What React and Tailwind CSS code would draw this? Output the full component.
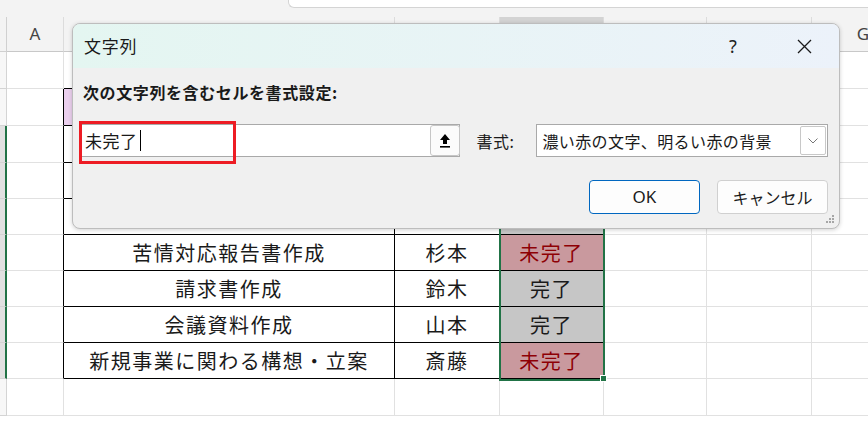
import React from 'react';

// column widths: row-header, A, B, C, D, E, F, G
const COLS = 'grid grid-cols-[7px_57px_331px_105px_104px_103px_105px_103px]';
const LETTERS = ['A', 'B', 'C', 'D', 'E', 'F', 'G'];

// rows 2-5 sit under the dialog, so only their fills matter
const ROWS = [
  { h: 'h-[37px]' },
  { h: 'h-[37px]', task: ' ', head: true },
  { h: 'h-[37px]', task: ' ', status: '完了', sel: true, hidden: true },
  { h: 'h-[36px]', task: ' ', status: '未完了', sel: true, hidden: true },
  { h: 'h-[36px]', task: ' ', status: '完了', sel: true, hidden: true },
  { h: 'h-[36px]', task: '苦情対応報告書作成', who: '杉本', status: '未完了', sel: true },
  { h: 'h-[36px]', task: '請求書作成', who: '鈴木', status: '完了', sel: true },
  { h: 'h-[36px]', task: '会議資料作成', who: '山本', status: '完了', sel: true },
  { h: 'h-[36px]', task: '新規事業に関わる構想・立案', who: '斎藤', status: '未完了', sel: true },
  { h: 'h-[37px]' },
];

function SheetRow({ row, aboveTable }) {
  const inTable = !!row.task;
  const cell = 'flex items-center justify-center border-r border-b';
  const tableBorder = 'border-black';
  const gridBorder = 'border-[#e1e1e1]';
  const edge = aboveTable ? 'border-r-[#e1e1e1] border-b-black' : gridBorder;

  let statusCls = `${cell} ${inTable ? tableBorder : edge}`;
  if (row.head) statusCls += ' bg-[#ebd0ee]';
  else if (row.sel && row.status === '未完了') statusCls += ' bg-[#c9999e] text-[#8e0005]';
  else if (row.sel) statusCls += ' bg-[#c6c6c6]';

  return (
    <div className={`${COLS} ${row.h}`}>
      <div
        className={`border-b ${
          row.sel
            ? 'bg-[#e1e1e1] border-b-[#d4d4d4] border-r-2 border-r-[#217346]'
            : 'bg-[#f7f7f7] border-r border-[#d4d4d4]'
        }`}
      />
      <div className={`border-b border-b-[#e1e1e1] border-r ${inTable ? 'border-r-black' : 'border-r-[#e1e1e1]'}`} />
      <div className={`${cell} ${inTable ? tableBorder : edge} ${row.head ? 'bg-[#ebd0ee]' : ''}`}>
        {row.task}
      </div>
      <div className={`${cell} ${inTable ? tableBorder : edge} ${row.head ? 'bg-[#ebd0ee]' : ''}`}>
        {row.who}
      </div>
      <div className={statusCls}>{row.hidden ? null : row.status}</div>
      <div className={`${cell} ${gridBorder}`} />
      <div className={`${cell} ${gridBorder}`} />
      <div className={`${cell} ${gridBorder}`} />
    </div>
  );
}

function UploadIcon() {
  return (
    <svg width="12" height="16" viewBox="0 0 12 16">
      <path d="M6 1 L11 7 H8 V11 H4 V7 H1 Z" fill="#000" />
      <rect x="1" y="13" width="10" height="1.6" fill="#000" />
    </svg>
  );
}

function ConditionDialog() {
  return (
    <div className="absolute left-[72px] top-[23px] w-[768px] h-[206px] rounded-[8px] border border-[#bdbdbd] bg-[#f0f0f0] shadow-[0_1px_4px_rgba(0,0,0,0.18)] overflow-hidden flex flex-col text-[#1a1a1a]">
      {/* Title bar */}
      <div className="h-[44px] flex items-center pl-[11px] pr-[21px] bg-gradient-to-r from-[#e4f6f1] to-[#ecf2fa]">
        <span className="text-[17px] tracking-[0.8px]">文字列</span>
        <span className="ml-auto w-[20px] text-center text-[18px] font-['Noto_Sans',sans-serif] text-[#222]">?</span>
        <div className="ml-[47px] w-[28px] h-[28px] flex items-center justify-center">
          <svg width="15" height="15" viewBox="0 0 15 15">
            <path d="M1 1 L14 14 M14 1 L1 14" stroke="#1a1a1a" strokeWidth="1.3" />
          </svg>
        </div>
      </div>

      {/* Body */}
      <div className="flex-1 flex flex-col pt-[14px] pl-[7px] pr-[11px]">
        <div className="ml-[3px] h-[20px] leading-[20px] text-[16px] font-bold tracking-[0.6px]">
          次の文字列を含むセルを書式設定:
        </div>

        <div className="mt-[22px] h-[33px] flex items-center">
          <div className="w-[381px] h-[33px] border border-[#a9a9a9] bg-white flex items-center">
            <span className="pl-[4px] text-[17px] tracking-[0.5px]">未完了</span>
            <span className="ml-[2px] w-px h-[21px] bg-black" />
            <div className="ml-auto -mr-px self-stretch w-[30px] rounded-[3px] border border-[#c6c6c6] bg-[#fbfbfb] flex items-center justify-center">
              <UploadIcon />
            </div>
          </div>
          <span className="ml-[16px] w-[60px] text-[16px] tracking-[0.5px]">書式:</span>
          <div className="w-[292px] h-[33px] border border-[#a9a9a9] bg-white flex items-center">
            <span className="pl-[5px] text-[16px] tracking-[0.4px]">濃い赤の文字、明るい赤の背景</span>
            <div className="ml-auto mr-[1px] w-[26px] h-[29px] rounded-[2px] border border-[#c8c8c8] flex items-center justify-center">
              <svg width="10" height="6" viewBox="0 0 10 6">
                <path d="M0.5 0.5 L5 5 L9.5 0.5" fill="none" stroke="#777" strokeWidth="1" />
              </svg>
            </div>
          </div>
        </div>

        <div className="mt-[23px] flex justify-end gap-[17px]">
          <button className="w-[111px] h-[34px] rounded-[4px] border border-[#0067c0] bg-[#fdfdfd] text-[17px] font-['Noto_Sans',sans-serif]">
            OK
          </button>
          <button className="w-[111px] h-[34px] rounded-[4px] border border-[#d0d0d0] bg-[#fdfdfd] text-[16px]">
            キャンセル
          </button>
        </div>
      </div>

      {/* resize grip */}
      <svg className="absolute right-[4px] bottom-[4px]" width="10" height="10" viewBox="0 0 10 10">
        <rect x="7" y="1" width="2" height="2" fill="#a6a6a6" />
        <rect x="4" y="4" width="2" height="2" fill="#a6a6a6" />
        <rect x="7" y="4" width="2" height="2" fill="#a6a6a6" />
        <rect x="1" y="7" width="2" height="2" fill="#a6a6a6" />
        <rect x="4" y="7" width="2" height="2" fill="#a6a6a6" />
        <rect x="7" y="7" width="2" height="2" fill="#a6a6a6" />
      </svg>
    </div>
  );
}

export default function App() {
  return (
    <div className="relative w-[868px] h-[421px] overflow-hidden bg-white font-['Noto_Sans_CJK_JP',sans-serif] text-[#1a1a1a]">
      {/* top strip with formula bar edge */}
      <div className="h-[17px] bg-[#f3f3f3] flex">
        <div className="ml-[288px] flex-1 h-[8px] bg-white border-l border-b border-[#d4d4d4] rounded-bl-[6px]" />
      </div>

      {/* column headers */}
      <div className={`${COLS} h-[35px] bg-[#f3f3f3]`}>
        <div className="border-r border-b border-[#d0d0d0]" />
        {LETTERS.map((l) => (
          <div
            key={l}
            className={`flex items-center justify-center border-r border-r-[#dcdcdc] text-[17px] text-[#444] font-['Noto_Sans',sans-serif] ${
              l === 'D' ? 'bg-[#d3d3d3] border-b-2 border-b-[#217346]' : 'border-b border-b-[#c8c8c8]'
            }`}
          >
            {l}
          </div>
        ))}
      </div>

      {/* cells */}
      <div className="text-[20px] tracking-[1.5px]">
        {ROWS.map((row, i) => (
          <SheetRow key={i} row={row} aboveTable={!row.task && !!ROWS[i + 1]?.task} />
        ))}
      </div>

      {/* selection outline on column D */}
      <div className="absolute left-[499px] top-[125px] w-[106px] h-[256px] border-2 border-[#217346] pointer-events-none" />
      <div className="absolute left-[600px] top-[375px] w-[7px] h-[7px] bg-[#217346] border border-white" />

      <ConditionDialog />

      {/* red highlight around the input */}
      <div className="absolute left-[79px] top-[121px] w-[157px] h-[43px] border-[3px] border-[#ed1c24]" />
    </div>
  );
}
